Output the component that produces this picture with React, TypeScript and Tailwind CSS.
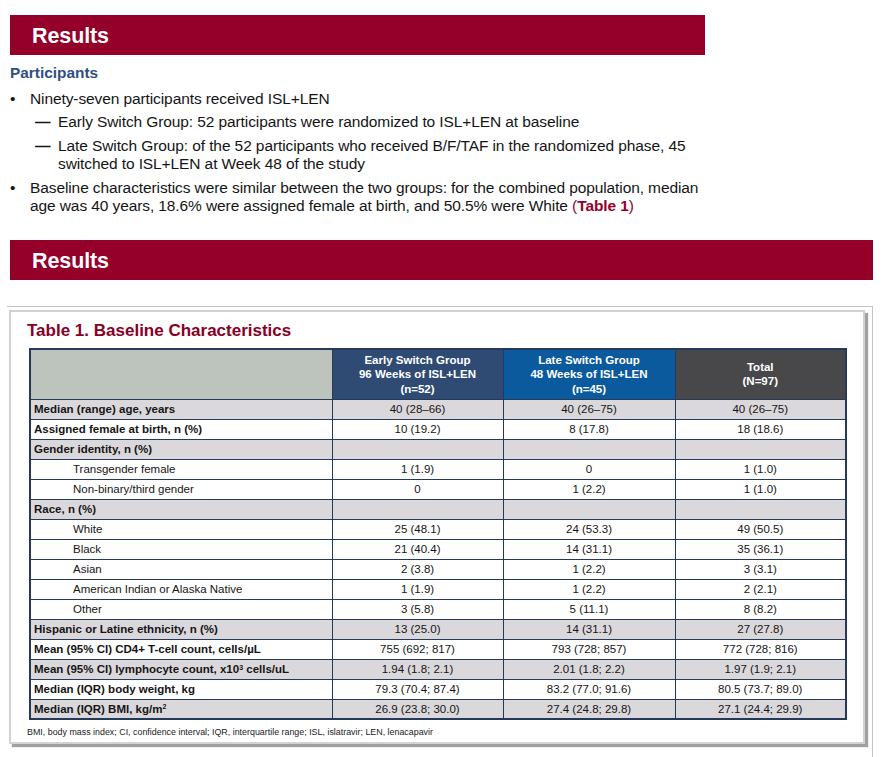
import React from 'react'

type Row = {
    label: React.ReactNode
    values: string[]
    bold?: boolean
    shade?: boolean
    indent?: boolean
}

const rows: Row[] = [
    { label: 'Median (range) age, years', bold: true, shade: true, values: ['40 (28–66)', '40 (26–75)', '40 (26–75)'] },
    { label: 'Assigned female at birth, n (%)', bold: true, values: ['10 (19.2)', '8 (17.8)', '18 (18.6)'] },
    { label: 'Gender identity, n (%)', bold: true, shade: true, values: ['', '', ''] },
    { label: 'Transgender female', indent: true, values: ['1 (1.9)', '0', '1 (1.0)'] },
    { label: 'Non-binary/third gender', indent: true, values: ['0', '1 (2.2)', '1 (1.0)'] },
    { label: 'Race, n (%)', bold: true, shade: true, values: ['', '', ''] },
    { label: 'White', indent: true, values: ['25 (48.1)', '24 (53.3)', '49 (50.5)'] },
    { label: 'Black', indent: true, values: ['21 (40.4)', '14 (31.1)', '35 (36.1)'] },
    { label: 'Asian', indent: true, values: ['2 (3.8)', '1 (2.2)', '3 (3.1)'] },
    { label: 'American Indian or Alaska Native', indent: true, values: ['1 (1.9)', '1 (2.2)', '2 (2.1)'] },
    { label: 'Other', indent: true, values: ['3 (5.8)', '5 (11.1)', '8 (8.2)'] },
    { label: 'Hispanic or Latine ethnicity, n (%)', bold: true, shade: true, values: ['13 (25.0)', '14 (31.1)', '27 (27.8)'] },
    { label: 'Mean (95% CI) CD4+ T-cell count, cells/µL', bold: true, values: ['755 (692; 817)', '793 (728; 857)', '772 (728; 816)'] },
    {
        label: (
            <>
                Mean (95% CI) lymphocyte count, x10<sup className="text-[7px]">3</sup> cells/uL
            </>
        ),
        bold: true,
        shade: true,
        values: ['1.94 (1.8; 2.1)', '2.01 (1.8; 2.2)', '1.97 (1.9; 2.1)']
    },
    { label: 'Median (IQR) body weight, kg', bold: true, values: ['79.3 (70.4; 87.4)', '83.2 (77.0; 91.6)', '80.5 (73.7; 89.0)'] },
    {
        label: (
            <>
                Median (IQR) BMI, kg/m<sup className="text-[7px]">2</sup>
            </>
        ),
        bold: true,
        shade: true,
        values: ['26.9 (23.8; 30.0)', '27.4 (24.8; 29.8)', '27.1 (24.4; 29.9)']
    }
]

function SectionBar({ wide }: { wide?: boolean }) {
    return (
        <div className={`ml-[10px] h-[40px] bg-[#95002a] flex items-center pl-[22px] pt-[3px] ${wide ? 'w-[863px]' : 'w-[695px]'}`}>
            <span className="text-white font-bold text-[21.5px] leading-none tracking-[-0.1px]">Results</span>
        </div>
    )
}

export default function App() {
    return (
        <div
            className="w-[893px] h-[757px] bg-white overflow-hidden pt-[15px] text-[#151515]"
            style={{ fontFamily: '"Liberation Sans", Arial, sans-serif' }}
        >
            <SectionBar />

            {/* Participants */}
            <div className="pl-[10px] mt-[9px]">
                <h2 className="text-[15.4px] leading-[18px] font-bold text-[#2f4f7f]">Participants</h2>
                <ul className="mt-[8px] text-[15.5px] leading-[18px] tracking-[-0.1px]">
                    <li className="flex">
                        <span className="w-[20px] shrink-0">•</span>
                        <span>Ninety-seven participants received ISL+LEN</span>
                    </li>
                    <li className="flex mt-[5px] pl-[25px]">
                        <span className="w-[23px] shrink-0 font-bold">—</span>
                        <span>Early Switch Group: 52 participants were randomized to ISL+LEN at baseline</span>
                    </li>
                    <li className="flex mt-[6px] pl-[25px]">
                        <span className="w-[23px] shrink-0 font-bold">—</span>
                        <span className="w-[640px]">
                            Late Switch Group: of the 52 participants who received B/F/TAF in the randomized phase, 45 switched to ISL+LEN at Week 48 of the study
                        </span>
                    </li>
                    <li className="flex mt-[6px]">
                        <span className="w-[20px] shrink-0">•</span>
                        <p className="w-[680px]">
                            Baseline characteristics were similar between the two groups: for the combined population, median age was 40 years, 18.6% were assigned female at birth, and 50.5% were White{' '}
                            <span className="text-[#95002a]">(</span>
                            <span className="text-[#95002a] font-bold">Table 1</span>
                            <span className="text-[#95002a]">)</span>
                        </p>
                    </li>
                </ul>
            </div>

            <div className="mt-[25px]">
                <SectionBar wide />
            </div>

            {/* Table frame */}
            <div className="mt-[26px] ml-[7px] w-[866px] h-[460px] border-t border-r border-[#c4c4c4] pt-[3px] pr-[4px]">
                <div className="ml-[2px] w-[856px] h-[434px] bg-white border-2 border-[#d2d2d2] shadow-[3px_3px_1px_#a0a0a0] pt-[8px] pl-[16px]">
                    <h3 className="text-[17px] leading-[22px] font-bold text-[#8a0024]">Table 1. Baseline Characteristics</h3>

                    <table className="mt-[6px] ml-[2px] table-fixed border-collapse border-2 border-[#253a5a] text-[11.5px]">
                        <colgroup>
                            <col className="w-[302px]" />
                            <col className="w-[171px]" />
                            <col className="w-[172px]" />
                            <col className="w-[171px]" />
                        </colgroup>
                        <thead>
                            <tr className="h-[50px] text-white font-bold leading-[14.5px] text-center">
                                <th className="bg-[#bcc4bd] border border-[#253a5a]"></th>
                                <th className="bg-[#2f4b74] border border-[#253a5a] font-bold">
                                    Early Switch Group
                                    <br />
                                    96 Weeks of ISL+LEN
                                    <br />
                                    (n=52)
                                </th>
                                <th className="bg-[#0b5a9e] border border-[#253a5a] font-bold">
                                    Late Switch Group
                                    <br />
                                    48 Weeks of ISL+LEN
                                    <br />
                                    (n=45)
                                </th>
                                <th className="bg-[#48484b] border border-[#253a5a] font-bold">
                                    Total
                                    <br />
                                    (N=97)
                                </th>
                            </tr>
                        </thead>
                        <tbody>
                            {rows.map((row, i) => (
                                <tr key={i} className={`h-[20px] leading-[14px] ${row.shade ? 'bg-[#dbd8dc]' : 'bg-white'}`}>
                                    <td
                                        className={`border border-[#253a5a] py-0 ${row.indent ? 'pl-[42px]' : 'pl-[3px]'} ${row.bold ? 'font-bold' : ''}`}
                                    >
                                        {row.label}
                                    </td>
                                    {row.values.map((v, j) => (
                                        <td key={j} className="border border-[#253a5a] text-center py-0">
                                            {v}
                                        </td>
                                    ))}
                                </tr>
                            ))}
                        </tbody>
                    </table>

                    <p className="mt-[6px] text-[8.9px] leading-[12px] text-[#222]">
                        BMI, body mass index; CI, confidence interval; IQR, interquartile range; ISL, islatravir; LEN, lenacapavir
                    </p>
                </div>
            </div>
        </div>
    )
}
